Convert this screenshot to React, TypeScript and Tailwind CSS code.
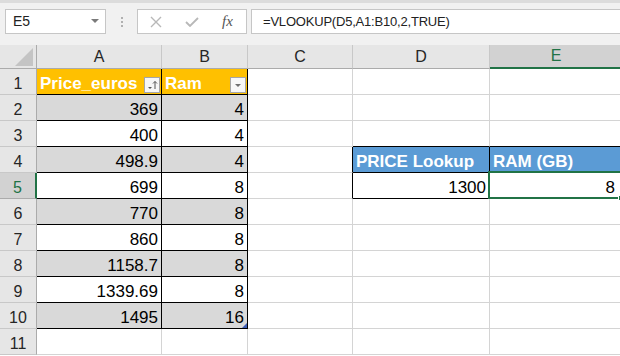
import React from "react";

const cols = ["A", "B", "C", "D", "E"];
const colW = ["w-[125px]", "w-[86px]", "w-[105px]", "w-[137px]", "w-[132px]"];

const priceVals = ["369", "400", "498.9", "699", "770", "860", "1158.7", "1339.69", "1495"];
const ramVals = ["4", "4", "4", "8", "8", "8", "8", "8", "16"];

const SortBtn = () => (
  <div className="absolute right-[1px] bottom-[1px] w-[16px] h-[16px] bg-[#f7f7f7] border border-[#a6a6a6]">
    <svg width="14" height="14" viewBox="0 0 14 14">
      <polygon points="3,9 7,9 5,11" fill="#555" />
      <line x1="10" y1="3.5" x2="10" y2="11" stroke="#555" strokeWidth="1" />
      <polyline points="8,5.5 10,3.5 12,5.5" fill="none" stroke="#555" strokeWidth="1" />
    </svg>
  </div>
);

const DropBtn = () => (
  <div className="absolute right-[1px] bottom-[1px] w-[16px] h-[16px] bg-[#f7f7f7] border border-[#a6a6a6]">
    <svg width="14" height="14" viewBox="0 0 14 14">
      <polygon points="4,6 10,6 7,9" fill="#6f6f6f" />
    </svg>
  </div>
);

function Cell({ r, c }: { r: number; c: number }) {
  const inTable = c <= 1 && r <= 10;
  const inLookup = (r === 4 || r === 5) && (c === 3 || c === 4);

  let bg = "bg-white";
  if (inTable && r === 1) bg = "bg-[#ffc000]";
  else if (inTable && r % 2 === 0) bg = "bg-[#d9d9d9]";
  else if (r === 4 && inLookup) bg = "bg-[#5b9bd5]";

  const rBlack = inTable || inLookup || ((r === 4 || r === 5) && c === 2);
  const bBlack = inTable || inLookup || (r === 3 && (c === 3 || c === 4));
  const rb = rBlack ? "border-r-black" : "border-r-[#d4d4d4]";
  const bb = bBlack ? "border-b-black" : "border-b-[#d4d4d4]";

  let text: React.ReactNode = null;
  let head = false;
  let extra: React.ReactNode = null;
  let pr = "pr-[3px]";

  if (r === 1 && c === 0) {
    text = "Price_euros";
    head = true;
    extra = <SortBtn />;
  } else if (r === 1 && c === 1) {
    text = "Ram";
    head = true;
    extra = <DropBtn />;
  } else if (inTable && r >= 2) {
    text = c === 0 ? priceVals[r - 2] : ramVals[r - 2];
    if (r === 10 && c === 1) {
      extra = (
        <svg className="absolute right-0 bottom-0" width="5" height="5" viewBox="0 0 5 5">
          <polygon points="5,0 5,5 0,5" fill="#3f5fb5" />
        </svg>
      );
    }
  } else if (r === 4 && c === 3) {
    text = "PRICE Lookup";
    head = true;
  } else if (r === 4 && c === 4) {
    text = "RAM (GB)";
    head = true;
  } else if (r === 5 && c === 3) {
    text = "1300";
  } else if (r === 5 && c === 4) {
    text = "8";
    pr = "pr-[6px]";
    extra = (
      <div className="absolute -left-[2px] -top-[2px] -right-[1px] -bottom-[1px] border-2 border-[#217346] z-10">
        <div className="absolute -right-[4px] -bottom-[4px] w-[6px] h-[6px] bg-[#217346] border border-white" />
      </div>
    );
  }

  return (
    <div
      className={`relative shrink-0 h-[26px] border-r border-b ${rb} ${bb} ${bg} ${colW[c]} flex items-end pb-[1px] leading-[19px] text-[17px] ${
        head ? "justify-start pl-[3px] font-bold text-white" : `justify-end ${pr} text-black`
      }`}
    >
      {text}
      {extra}
    </div>
  );
}

export default function App() {
  const rows = Array.from({ length: 11 }, (_, i) => i + 1);
  return (
    <div className="w-[620px] h-[356px] overflow-hidden bg-white font-['Liberation_Sans',Arial,sans-serif]">
      {/* formula bar */}
      <div className="h-[45px] bg-[#f1f1f1] border-t-[3px] border-t-[#dcdcdc] flex items-start pt-[6px] pl-[5px]">
        <div className="w-[101px] h-[25px] bg-white border border-[#c6c6c6] flex items-center justify-between pl-[7px] pr-[6px]">
          <span className="text-[14px] text-[#222]">E5</span>
          <svg width="8" height="5" viewBox="0 0 8 5">
            <polygon points="0,0 8,0 4,4" fill="#7a7a7a" />
          </svg>
        </div>
        <div className="ml-[15px] h-[25px] flex flex-col justify-center gap-[2px]">
          <div className="w-[2px] h-[2px] bg-[#b0b0b0]" />
          <div className="w-[2px] h-[2px] bg-[#b0b0b0]" />
          <div className="w-[2px] h-[2px] bg-[#b0b0b0]" />
        </div>
        <div className="ml-[14px] w-[110px] h-[25px] bg-white border border-[#c6c6c6] flex items-center pl-[12px]">
          <svg width="12" height="12" viewBox="0 0 12 12">
            <path d="M1 1 L11 11 M11 1 L1 11" stroke="#b8b8b8" strokeWidth="1.4" />
          </svg>
          <svg className="ml-[23px]" width="14" height="10" viewBox="0 0 14 10">
            <path d="M1 5 L5 9 L13 1" fill="none" stroke="#b8b8b8" strokeWidth="1.8" />
          </svg>
          <span className="ml-[23px] text-[15px] italic text-[#555] font-['Liberation_Serif',serif] leading-none">fx</span>
        </div>
        <div className="ml-[4px] flex-1 h-[25px] bg-white border border-r-0 border-[#c6c6c6] flex items-center pl-[11px]">
          <span className="text-[13px] tracking-[-0.2px] text-[#222]">=VLOOKUP(D5,A1:B10,2,TRUE)</span>
        </div>
      </div>

      {/* column headers */}
      <div className="flex h-[24px] bg-[#e6e6e6]">
        <div className="relative shrink-0 w-[37px] h-[24px] border-r border-b border-[#ababab]">
          <svg className="absolute left-0 top-0" width="36" height="23" viewBox="0 0 36 23">
            <polygon points="33,3 33,21 15,21" fill="#c4c4c4" />
          </svg>
        </div>
        {cols.map((l, i) =>
          i === 4 ? (
            <div
              key={l}
              className={`shrink-0 ${colW[i]} h-[24px] bg-[#d2d2d2] border-b-2 border-b-[#217346] flex items-center justify-center text-[16px] text-[#217346]`}
            >
              {l}
            </div>
          ) : (
            <div
              key={l}
              className={`shrink-0 ${colW[i]} h-[24px] border-r border-r-[#c8c8c8] border-b border-b-[#ababab] flex items-center justify-center text-[16px] text-[#262626]`}
            >
              {l}
            </div>
          )
        )}
      </div>

      {/* rows */}
      {rows.map((r) => (
        <div key={r} className="flex">
          {r === 5 ? (
            <div className="shrink-0 w-[37px] h-[26px] bg-[#d2d2d2] border-r-2 border-r-[#217346] border-b border-b-[#ababab] flex items-end justify-center pb-[1px] leading-[19px] text-[16px] text-[#217346]">
              {r}
            </div>
          ) : (
            <div className="shrink-0 w-[37px] h-[26px] bg-[#e6e6e6] border-r border-r-[#ababab] border-b border-b-[#c8c8c8] flex items-end justify-center pb-[1px] leading-[19px] text-[16px] text-[#262626]">
              {r}
            </div>
          )}
          {cols.map((_, c) => (
            <Cell key={c} r={r} c={c} />
          ))}
        </div>
      ))}
    </div>
  );
}
